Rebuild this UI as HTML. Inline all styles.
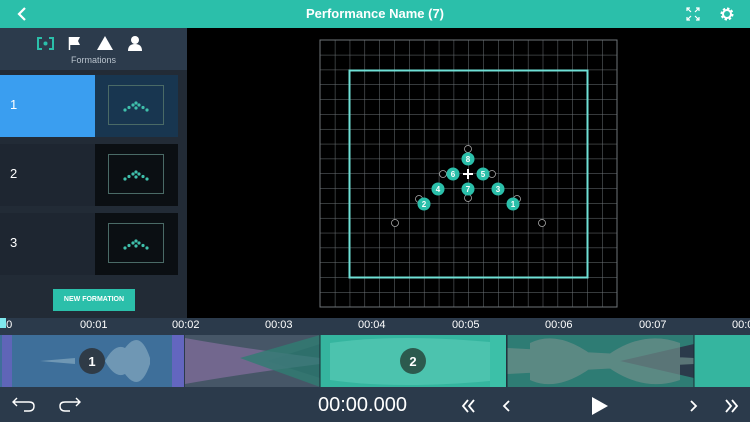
<!DOCTYPE html>
<html><head><meta charset="utf-8"><style>
*{margin:0;padding:0;box-sizing:border-box}
body{width:750px;height:422px;overflow:hidden;background:#000;font-family:"Liberation Sans",sans-serif;position:relative}
.hdr{position:absolute;left:0;top:0;width:750px;height:28px;background:#2bbfaa;color:#fff;text-align:center;font-size:13px;line-height:28px;font-weight:bold}
.side{position:absolute;left:0;top:28px;width:187px;height:290px;background:#222b36}
.tabs{position:absolute;left:0;top:0;width:187px;height:42px;background:#2c3b4c}
.row{position:absolute;left:0;width:178px;height:62px;background:#1e2631}
.row .n{position:absolute;left:10px;top:22px;color:#fff;font-size:13px}
.row .th{position:absolute;left:95px;top:0;width:83px;height:62px;background:#0b0f13}
.row .th .b{position:absolute;left:13px;top:10px;width:56px;height:40px;border:1px solid #4a6a66}
.btn{position:absolute;left:53px;top:261px;width:82px;height:22px;background:#2bbfaa;color:#fff;font-size:7px;font-weight:bold;text-align:center;line-height:22px}
.tl{position:absolute;left:0;top:318px;width:750px;height:104px;background:#2b3a4b}
.t{position:absolute;top:1px;color:#fff;font-size:11px}
</style></head><body>
<div class="hdr">Performance Name (7)
<svg style="position:absolute;left:16px;top:7px" width="12" height="14"><path d="M9 1 L3 7 L9 13" stroke="#fff" stroke-width="2.2" fill="none"/></svg>
<svg style="position:absolute;left:686px;top:7px" width="14" height="14" stroke="#fff" stroke-width="1.2" fill="none"><path d="M1 4V1H4M1 1L5 5M13 4V1H10M13 1L9 5M1 10V13H4M1 13L5 9M13 10V13H10M13 13L9 9"/></svg>
<svg style="position:absolute;left:720px;top:7px" width="14" height="14"><circle cx="7" cy="7" r="5" fill="none" stroke="#fff" stroke-width="3" stroke-dasharray="2.2 1.7"/><circle cx="7" cy="7" r="4" fill="none" stroke="#fff" stroke-width="2"/></svg>
</div>
<div class="side">
<div class="tabs">
<svg style="position:absolute;left:37px;top:9px" width="17" height="13"><path d="M5 1H1V12H5M12 1H16V12H12" fill="none" stroke="#2bbfaa" stroke-width="2"/><circle cx="8.5" cy="6.5" r="2" fill="#2bbfaa"/></svg>
<svg style="position:absolute;left:68px;top:8px" width="14" height="14"><path d="M1.5 1V14" stroke="#fff" stroke-width="1.5"/><path d="M2 1H12L10 5L12 9H2Z" fill="#fff"/></svg>
<svg style="position:absolute;left:96px;top:8px" width="18" height="14"><path d="M9 0L17 14H1Z" fill="#fff"/></svg>
<svg style="position:absolute;left:127px;top:7px" width="16" height="16"><circle cx="8" cy="5" r="4" fill="#fff"/><path d="M1 16Q1 9 8 9Q15 9 15 16Z" fill="#fff"/></svg>
<div style="position:absolute;left:0;width:187px;top:27px;text-align:center;color:#b8c2cc;font-size:9px">Formations</div>
</div>
<div class="row" style="top:47px;background:#3a9ef0"><span class="n">1</span><div class="th" style="background:#183650"><div class="b"></div></div></div>
<div class="row" style="top:116px"><span class="n">2</span><div class="th"><div class="b"></div></div></div>
<div class="row" style="top:185px"><span class="n">3</span><div class="th"><div class="b"></div></div></div>
<svg style="position:absolute;left:0;top:0" width="187" height="290" fill="#3fbfab">
<g id="m"><circle cx="125" cy="82" r="1.6"/><circle cx="129" cy="79.5" r="1.6"/><circle cx="133" cy="77" r="1.6"/><circle cx="136" cy="75" r="1.6"/><circle cx="139" cy="77" r="1.6"/><circle cx="143" cy="79.5" r="1.6"/><circle cx="147" cy="82" r="1.6"/><circle cx="136" cy="80" r="1.6"/></g>
<use href="#m" y="69"/><use href="#m" y="138"/>
</svg>
<div class="btn">NEW FORMATION</div>
</div>
<svg style="position:absolute;left:0;top:0" width="750" height="318">
<defs><pattern id="g" x="320" y="40" width="14.85" height="14.83" patternUnits="userSpaceOnUse"><path d="M0 0H14.85M0 0V14.83" stroke="#6e7478" stroke-width="1" fill="none"/></pattern></defs>
<rect x="320" y="40" width="297" height="267" fill="url(#g)" stroke="#6e7478"/>
<rect x="349.5" y="70.5" width="238" height="207" fill="none" stroke="#6fe0d6" stroke-width="2"/>
<g fill="#000" stroke="#aaa" stroke-width="0.8">
<circle cx="468" cy="149" r="3.5"/><circle cx="443" cy="174" r="3.5"/><circle cx="492" cy="174" r="3.5"/><circle cx="419" cy="199" r="3.5"/><circle cx="517" cy="199" r="3.5"/><circle cx="468" cy="198" r="3.5"/><circle cx="395" cy="223" r="3.5"/><circle cx="542" cy="223" r="3.5"/></g>
<g fill="#2bbfaa"><circle cx="468" cy="159" r="6.5"/><circle cx="453" cy="174" r="6.5"/><circle cx="483" cy="174" r="6.5"/><circle cx="438" cy="189" r="6.5"/><circle cx="468" cy="189" r="6.5"/><circle cx="498" cy="189" r="6.5"/><circle cx="424" cy="204" r="6.5"/><circle cx="513" cy="204" r="6.5"/></g>
<g fill="#fff" font-size="8" font-weight="bold" text-anchor="middle" font-family="Liberation Sans">
<text x="468" y="162">8</text><text x="453" y="177">6</text><text x="483" y="177">5</text><text x="438" y="192">4</text><text x="468" y="192">7</text><text x="498" y="192">3</text><text x="424" y="207">2</text><text x="513" y="207">1</text></g>
<path d="M468 169V179M463 174H473" stroke="#fff" stroke-width="2"/>
</svg>
<div class="tl">
<span class="t" style="left:0">00</span><span class="t" style="left:80px">00:01</span><span class="t" style="left:172px">00:02</span><span class="t" style="left:265px">00:03</span><span class="t" style="left:358px">00:04</span><span class="t" style="left:452px">00:05</span><span class="t" style="left:545px">00:06</span><span class="t" style="left:639px">00:07</span><span class="t" style="left:732px">00:0</span>
<svg style="position:absolute;left:0;top:0" width="750" height="104">
<rect x="0" y="0" width="6" height="10" fill="#7fe8ee"/>
<rect x="0" y="17" width="184" height="52" fill="#3e6f9a"/>
<rect x="2" y="17" width="10" height="52" fill="#5f65b8"/><rect x="172" y="17" width="12" height="52" fill="#6366c0"/>
<path d="M40 43L75 40L75 46Z M105 43Q115 25 125 30Q140 10 150 40L150 46Q140 76 125 56Q115 61 105 43Z" fill="#6f97b4"/>
<path d="M185 17L320 60V69L185 69Z M185 17L320 17V26L185 69Z" fill="#58697a" opacity="0.6"/>
<path d="M185 20Q240 30 320 40V46Q240 56 185 66Z" fill="#7d6b98" opacity="0.8"/>
<path d="M240 40L320 17V69Z" fill="#2f7d73" opacity="0.8"/>
<rect x="320" y="17" width="186" height="52" fill="#35b59f"/>
<path d="M330 25Q400 15 500 25L500 62Q400 72 330 62Z" fill="#4cc3ae"/>
<rect x="490" y="17" width="16" height="52" fill="#3cc0a8"/>
<path d="M507 17L694 60V69L507 69Z M507 17L694 17V26L507 69Z" fill="#2e7c74"/>
<path d="M507 30L694 40V46L507 56Z M530 25Q560 10 600 43Q640 10 680 25L680 62Q640 76 600 43Q560 76 530 62Z" fill="#6f8f8a" opacity="0.7"/>
<rect x="694" y="17" width="56" height="52" fill="#35b59f"/>
<line x1="320" y1="17" x2="320" y2="69" stroke="#1a2a33"/><line x1="507" y1="17" x2="507" y2="69" stroke="#1a2a33"/><line x1="694" y1="17" x2="694" y2="69" stroke="#1a2a33"/>
<circle cx="92" cy="43" r="13" fill="#2f3b47"/><text x="92" y="48" fill="#fff" font-size="13" font-weight="bold" text-anchor="middle" font-family="Liberation Sans">1</text>
<circle cx="413" cy="43" r="13" fill="#2c5a4e"/><text x="413" y="48" fill="#fff" font-size="13" font-weight="bold" text-anchor="middle" font-family="Liberation Sans">2</text>
<g stroke="#fff" stroke-width="1.4" fill="none"><path d="M17 80L13 84L17 88M13 84H29Q34 84 34 88Q34 93 29 93H24"/><path d="M76 80L80 84L76 88M80 84H65Q60 84 60 88Q60 93 65 93H70"/>
<path d="M468 82L463 88L468 94M474 82L469 88L474 94" stroke-width="1.8"/><path d="M509 83L504 88L509 93" stroke-width="1.8"/><path d="M691 83L696 88L691 93" stroke-width="1.8"/><path d="M726 82L731 88L726 94M732 82L737 88L732 94" stroke-width="1.8"/></g>
<path d="M592 79L608 88L592 97Z" fill="#fff"/>
</svg>
<div style="position:absolute;left:318px;top:76px;color:#fff;font-size:20px">00:00.000</div>
</div>
</body></html>
